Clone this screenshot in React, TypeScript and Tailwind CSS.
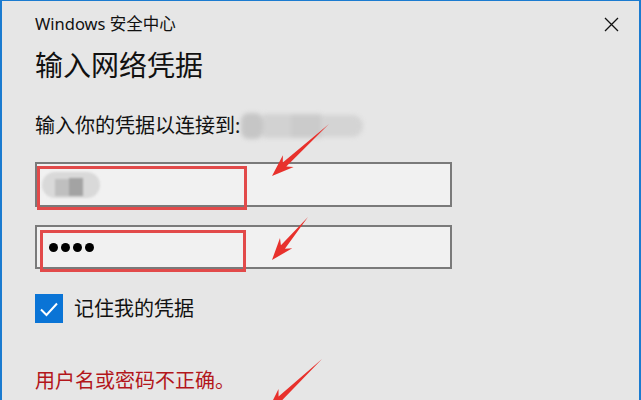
import React from 'react';

const arrows = [
  { x1: 329, y1: 124, x2: 272, y2: 176 },
  { x1: 308, y1: 217, x2: 272, y2: 260 },
  { x1: 322, y1: 359, x2: 268, y2: 410 },
];

const Arrow: React.FC<{ x1: number; y1: number; x2: number; y2: number }> = ({ x1, y1, x2, y2 }) => {
  const dx = x2 - x1;
  const dy = y2 - y1;
  const L = Math.sqrt(dx * dx + dy * dy);
  const angle = (Math.atan2(dy, dx) * 180) / Math.PI;
  const pts = `0,0 ${L - 17},-2.6 ${L - 22},-8 ${L},0 ${L - 22},8 ${L - 17},2.6`;
  return (
    <g transform={`translate(${x1} ${y1}) rotate(${angle})`}>
      <polygon points={pts} fill="#e8312c" />
    </g>
  );
};

export default function App() {
  return (
    <div
      className="relative w-[641px] h-[400px] overflow-hidden bg-[#e6e6e6] border-t border-l-2 border-r-2 border-[#1b7bd0] text-[#1a1a1a]"
      style={{ fontFamily: '"Noto Sans", "Noto Sans CJK SC", sans-serif' }}
    >
      <div className="pl-[33px]">
        {/* title bar */}
        <div className="flex items-center justify-between pt-[12px] pr-[20px]">
          <span className="text-[16.5px] leading-[22px] text-[#111]">Windows 安全中心</span>
          <svg width="15" height="15" viewBox="0 0 15 15" className="text-[#111]">
            <path d="M1 1 L14 14 M14 1 L1 14" stroke="currentColor" strokeWidth="1.3" fill="none" />
          </svg>
        </div>

        <h1 className="mt-[12px] text-[28px] leading-[36px] font-normal text-[#111]">输入网络凭据</h1>

        <div className="mt-[30px] flex items-center h-[26px]">
          <span className="text-[20px] leading-[26px] text-[#111]">输入你的凭据以连接到:</span>
          <div className="flex items-center ml-[1px] blur-[2px]">
            <div className="w-[22px] h-[26px] bg-[#c6c6c6] rounded-[8px]" />
            <div className="w-[28px] h-[24px] bg-[#d2d2d2]" />
            <div className="w-[30px] h-[24px] bg-[#cbcbcb]" />
            <div className="w-[42px] h-[22px] bg-[#d4d4d4] rounded-r-[11px]" />
          </div>
        </div>

        {/* username */}
        <div className="mt-[23px] w-[417px] h-[45px] bg-[#f1f1f1] border-2 border-[#7a7a7a] flex items-center pl-[5px]">
          <div className="relative w-[58px] h-[28px] blur-[1.2px]">
            <div className="absolute left-0 top-[1px] w-[58px] h-[26px] rounded-full bg-[#d9d9d9]" />
            <div className="absolute left-[13px] top-[8px] w-[14px] h-[17px] bg-[#bfbfbf]" />
            <div className="absolute left-[27px] top-[7px] w-[14px] h-[18px] bg-[#a3a3a3]" />
          </div>
        </div>

        {/* password */}
        <div className="mt-[18px] w-[417px] h-[44px] bg-[#f1f1f1] border-2 border-[#7a7a7a] flex items-center pl-[12px] gap-[3px]">
          <div className="w-[9px] h-[9px] rounded-full bg-black" />
          <div className="w-[9px] h-[9px] rounded-full bg-black" />
          <div className="w-[9px] h-[9px] rounded-full bg-black" />
          <div className="w-[9px] h-[9px] rounded-full bg-black" />
        </div>

        {/* remember */}
        <div className="mt-[25px] flex items-center">
          <div className="w-[28px] h-[29px] bg-[#0a74d6] flex items-center justify-center">
            <svg width="20" height="16" viewBox="0 0 20 16">
              <path d="M2 8.5 L7.5 14 L18 2.5" stroke="white" strokeWidth="2" fill="none" />
            </svg>
          </div>
          <span className="ml-[11px] text-[20px] leading-[26px] text-[#111]">记住我的凭据</span>
        </div>

        <div className="mt-[45px] text-[20px] leading-[26px] text-[#b3161b]">用户名或密码不正确。</div>
      </div>

      {/* annotations */}
      <div className="absolute left-[35px] top-[165px] w-[210px] h-[44px] border-[3px] border-[#e24a4a]" />
      <div className="absolute left-[38px] top-[229px] w-[206px] h-[42px] border-[3px] border-[#e24a4a]" />
      <svg className="absolute -left-[2px] -top-[1px]" width="641" height="400">
        {arrows.map((a, i) => (
          <Arrow key={i} {...a} />
        ))}
      </svg>
    </div>
  );
}
